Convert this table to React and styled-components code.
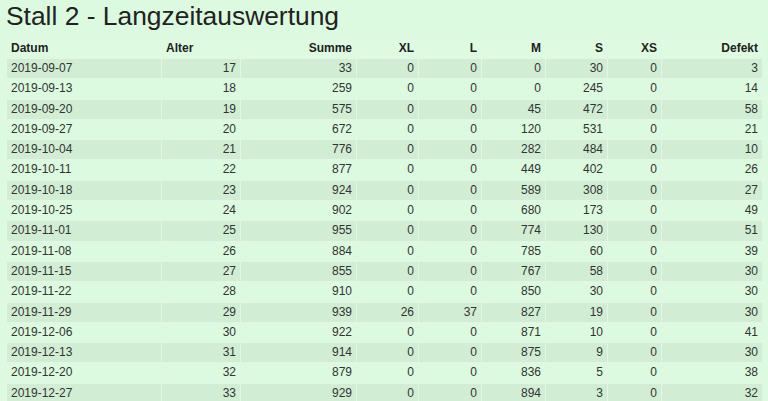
import React from "react";
import styled, { createGlobalStyle } from "styled-components";

const GlobalStyle = createGlobalStyle`
  html, body {
    margin: 0;
    padding: 0;
    background: #dcfadf;
  }
  body {
    font-family: "Liberation Sans", Arial, sans-serif;
    color: #333;
  }
`;

const Page = styled.div`
  padding: 0 6px;
`;

const Title = styled.h1`
  margin: 1px 0 7px;
  font-size: 26.4px;
  line-height: 30px;
  font-weight: normal;
  color: #222;
`;

const Table = styled.table`
  width: 756px;
  border-collapse: collapse;
  font-size: 12px;
  table-layout: fixed;
  border: 1px solid #e6f5e8;
`;

const HeadCell = styled.th`
  box-sizing: border-box;
  width: ${(p) => p.$w}px;
  padding: 1px 4px;
  line-height: 17px;
  height: 20px;
  font-weight: bold;
  text-align: ${(p) => (p.$left ? "left" : "right")};
  color: #222;
  border: 1px solid #e4f4e6;
  background: #defbe2;
`;

const Row = styled.tr`
  background: ${(p) => (p.$odd ? "#d1eed5" : "#dcfadf")};
`;

const Cell = styled.td`
  padding: 1px 4px;
  line-height: 17.3px;
  height: 17.3px;
  text-align: ${(p) => (p.$left ? "left" : "right")};
  border: 1px solid #e4f4e6;
  white-space: nowrap;
  overflow: hidden;
`;

const columns = [
  { label: "Datum", w: 155, left: true },
  { label: "Alter", w: 79, left: true },
  { label: "Summe", w: 116 },
  { label: "XL", w: 62 },
  { label: "L", w: 63 },
  { label: "M", w: 64 },
  { label: "S", w: 62 },
  { label: "XS", w: 54 },
  { label: "Defekt", w: 101 },
];

const rows = [
  ["2019-09-07", 17, 33, 0, 0, 0, 30, 0, 3],
  ["2019-09-13", 18, 259, 0, 0, 0, 245, 0, 14],
  ["2019-09-20", 19, 575, 0, 0, 45, 472, 0, 58],
  ["2019-09-27", 20, 672, 0, 0, 120, 531, 0, 21],
  ["2019-10-04", 21, 776, 0, 0, 282, 484, 0, 10],
  ["2019-10-11", 22, 877, 0, 0, 449, 402, 0, 26],
  ["2019-10-18", 23, 924, 0, 0, 589, 308, 0, 27],
  ["2019-10-25", 24, 902, 0, 0, 680, 173, 0, 49],
  ["2019-11-01", 25, 955, 0, 0, 774, 130, 0, 51],
  ["2019-11-08", 26, 884, 0, 0, 785, 60, 0, 39],
  ["2019-11-15", 27, 855, 0, 0, 767, 58, 0, 30],
  ["2019-11-22", 28, 910, 0, 0, 850, 30, 0, 30],
  ["2019-11-29", 29, 939, 26, 37, 827, 19, 0, 30],
  ["2019-12-06", 30, 922, 0, 0, 871, 10, 0, 41],
  ["2019-12-13", 31, 914, 0, 0, 875, 9, 0, 30],
  ["2019-12-20", 32, 879, 0, 0, 836, 5, 0, 38],
  ["2019-12-27", 33, 929, 0, 0, 894, 3, 0, 32],
];

export default function App() {
  return (
    <>
      <GlobalStyle />
      <Page>
        <Title>Stall 2 - Langzeitauswertung</Title>
        <Table>
          <thead>
            <tr>
              {columns.map((c) => (
                <HeadCell key={c.label} $w={c.w} $left={c.left}>
                  {c.label}
                </HeadCell>
              ))}
            </tr>
          </thead>
          <tbody>
            {rows.map((r, i) => (
              <Row key={r[0]} $odd={i % 2 === 0}>
                {r.map((v, j) => (
                  <Cell key={j} $left={j === 0}>
                    {v}
                  </Cell>
                ))}
              </Row>
            ))}
          </tbody>
        </Table>
      </Page>
    </>
  );
}
